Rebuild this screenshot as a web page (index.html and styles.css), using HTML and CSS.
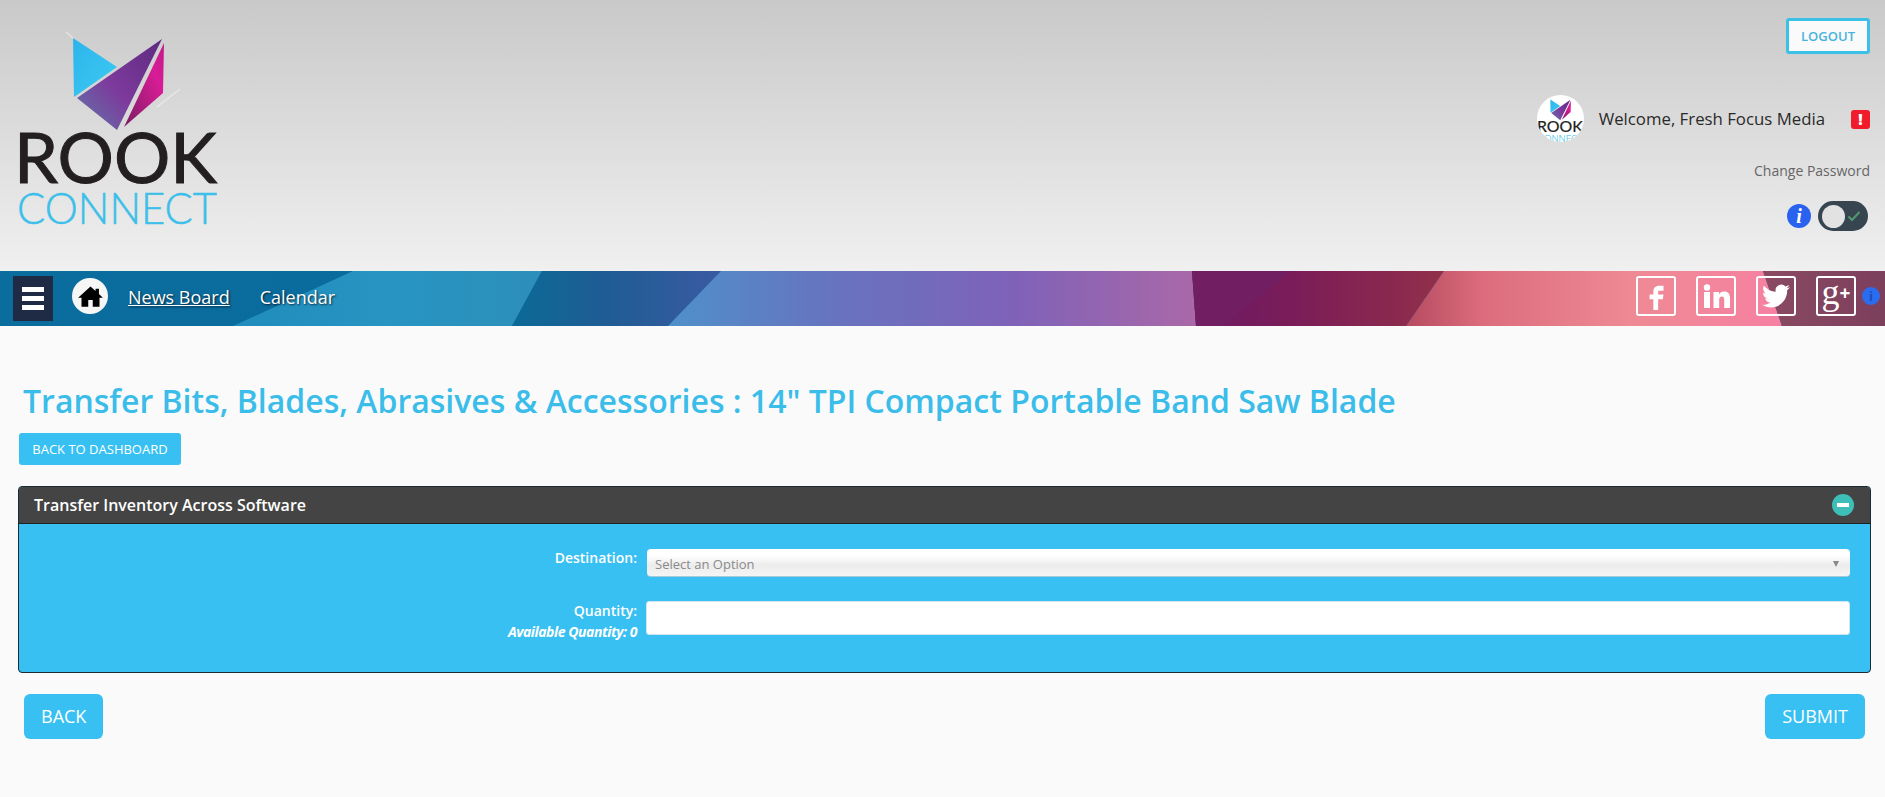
FILE: index.html
```html
<!DOCTYPE html>
<html lang="en">
<head>
  <meta charset="UTF-8">
  <meta name="viewport" content="width=device-width, initial-scale=1.0">
  <title>Transfer Inventory</title>
  <link rel="stylesheet" href="styles.css">
</head>
<body>
  <svg class="defs" width="0" height="0">
    <defs>
      <linearGradient id="g-cyan" x1="0" y1="0" x2="1" y2="1">
        <stop offset="0" stop-color="#2db4ec"/>
        <stop offset="1" stop-color="#3ccbf2"/>
      </linearGradient>
      <linearGradient id="g-purple" x1="0" y1="1" x2="1" y2="0">
        <stop offset="0" stop-color="#5f78aa"/>
        <stop offset="0.45" stop-color="#7d3a9c"/>
        <stop offset="1" stop-color="#5e2a80"/>
      </linearGradient>
      <linearGradient id="g-magenta" x1="0" y1="1" x2="1" y2="0">
        <stop offset="0" stop-color="#7a1d62"/>
        <stop offset="0.7" stop-color="#d81c96"/>
        <stop offset="1" stop-color="#c21a8a"/>
      </linearGradient>
      <symbol id="rook-logo" viewBox="0 0 240 240">
        <path d="M66 32 L74 39 M157 107 L180 89" stroke="#f4f4f4" stroke-width="1.5" stroke-opacity="0.6" fill="none"/>
        <polygon points="73,38 117,67 74,97" fill="url(#g-cyan)"/>
        <polygon points="162,39 77,98 117,130" fill="url(#g-purple)"/>
        <polygon points="164,43 124,127 163,93" fill="url(#g-magenta)"/>
        <text class="logo-rook" x="14" y="183" textLength="203" lengthAdjust="spacingAndGlyphs">ROOK</text>
        <text class="logo-connect" x="17" y="224" textLength="200" lengthAdjust="spacingAndGlyphs">CONNECT</text>
      </symbol>
    </defs>
  </svg>

  <header class="top-header">
    <a class="logo" href="#"><svg width="240" height="240"><use href="#rook-logo"/></svg></a>
    <div class="user-box">
      <a class="logout-btn" href="#">LOGOUT</a>
      <div class="welcome-row">
        <span class="avatar"><svg width="47" height="47" viewBox="14 18 208 208"><use href="#rook-logo" width="240" height="240"/></svg></span>
        <span class="welcome-text">Welcome, Fresh Focus Media</span>
        <span class="alert-icon">!</span>
      </div>
      <a class="change-pass" href="#">Change Password</a>
      <div class="toggle-row">
        <span class="info-icon">i</span>
        <span class="toggle">
          <span class="toggle-knob"></span>
          <svg class="toggle-check" width="14" height="12" viewBox="0 0 14 12"><path d="M1.5 6.5 L5 10 L12.5 2" fill="none" stroke="#4f9a70" stroke-width="2"/></svg>
        </span>
      </div>
    </div>
  </header>

  <nav class="main-nav">
    <svg class="nav-bg" width="1885" height="55" viewBox="0 0 1885 55" preserveAspectRatio="none">
      <defs>
        <linearGradient id="n-left"><stop offset="0" stop-color="#0b6c9e"/><stop offset="1" stop-color="#05689a"/></linearGradient>
        <linearGradient id="n-teal"><stop offset="0" stop-color="#1f8cbc"/><stop offset="0.5" stop-color="#2794c2"/><stop offset="1" stop-color="#2d8fba"/></linearGradient>
        <linearGradient id="n-navy"><stop offset="0" stop-color="#0b6a96"/><stop offset="0.45" stop-color="#1f5c94"/><stop offset="1" stop-color="#3a5aa2"/></linearGradient>
        <linearGradient id="n-violet"><stop offset="0" stop-color="#4f90ca"/><stop offset="0.3" stop-color="#6674c0"/><stop offset="0.65" stop-color="#7e62b8"/><stop offset="1" stop-color="#aa68a8"/></linearGradient>
        <linearGradient id="n-wine"><stop offset="0" stop-color="#6d1b66"/><stop offset="0.4" stop-color="#7a1c58"/><stop offset="1" stop-color="#92304a"/></linearGradient>
        <linearGradient id="n-pink"><stop offset="0" stop-color="#b54a60"/><stop offset="0.2" stop-color="#dc6c7c"/><stop offset="0.6" stop-color="#ee8a94"/><stop offset="1" stop-color="#f680a2"/></linearGradient>
        <linearGradient id="n-plum"><stop offset="0" stop-color="#8a4a62"/><stop offset="1" stop-color="#7c3f5c"/></linearGradient>
      </defs>
      <rect width="1885" height="55" fill="url(#n-left)"/>
      <polygon points="353,0 542,0 512,55 233,55" fill="url(#n-teal)"/>
      <polygon points="542,0 721,0 668,55 512,55" fill="url(#n-navy)"/>
      <polygon points="721,0 1192,0 1196,55 668,55" fill="url(#n-violet)"/>
      <polygon points="1192,0 1444,0 1406,55 1196,55" fill="url(#n-wine)"/>
      <polygon points="1192,0 1291,0 1222,55 1196,55" fill="#721e62"/>
      <polygon points="1444,0 1763,0 1782,55 1406,55" fill="url(#n-pink)"/>
      <polygon points="1763,0 1885,0 1885,55 1782,55" fill="url(#n-plum)"/>
    </svg>
    <div class="nav-left">
      <button class="menu-btn" type="button"><span></span><span></span><span></span></button>
      <a class="home-btn" href="#">
        <svg width="27" height="27" viewBox="0 0 24 24"><path d="M12 3 L1 13 H4 V21 H10 V15 H14 V21 H20 V13 H23 L19.5 9.8 V5 H16.5 V7.1 Z" fill="#000"/></svg>
      </a>
      <a class="nav-link current" href="#">News Board</a>
      <a class="nav-link" href="#">Calendar</a>
    </div>
    <div class="nav-right">
      <a class="social" href="#">
        <svg width="26" height="30" viewBox="0 0 24 28"><path d="M15 9 H19 V4.5 H15 C11.5 4.5 9.5 6.6 9.5 10 V12.5 H6 V17 H9.5 V27 H14 V17 H18.4 L19 12.5 H14 V10.2 C14 9.4 14.3 9 15 9 Z" fill="#fff"/></svg>
      </a>
      <a class="social" href="#">
        <svg width="30" height="30" viewBox="0 0 30 30"><circle cx="6" cy="6.5" r="3.2" fill="#fff"/><rect x="3" y="11" width="6" height="16" fill="#fff"/><path d="M12.5 11 H18 V13.4 C19 11.8 20.8 10.6 23 10.6 C27.2 10.6 29 13.2 29 17.4 V27 H23.2 V18.4 C23.2 16.4 22.4 15.4 20.9 15.4 C19.2 15.4 18.2 16.6 18.2 18.6 V27 H12.5 Z" fill="#fff"/></svg>
      </a>
      <a class="social" href="#">
        <svg width="28" height="28" viewBox="0 0 24 24"><path d="M23.953 4.57a10 10 0 01-2.825.775 4.958 4.958 0 002.163-2.723c-.951.555-2.005.959-3.127 1.184a4.92 4.92 0 00-8.384 4.482C7.69 8.095 4.067 6.13 1.64 3.162a4.822 4.822 0 00-.666 2.475c0 1.71.87 3.213 2.188 4.096a4.904 4.904 0 01-2.228-.616v.06a4.923 4.923 0 003.946 4.827 4.996 4.996 0 01-2.212.085 4.936 4.936 0 004.604 3.417 9.867 9.867 0 01-6.102 2.105c-.39 0-.779-.023-1.17-.067a13.995 13.995 0 007.557 2.209c9.053 0 13.998-7.496 13.998-13.985 0-.21 0-.42-.015-.63A9.935 9.935 0 0024 4.59z" fill="#fff"/></svg>
      </a>
      <a class="social social-text" href="#"><span class="gee">g</span><span class="plus">+</span></a>
      <span class="nav-info">i</span>
    </div>
  </nav>

  <main class="content">
    <h1 class="page-title">Transfer Bits, Blades, Abrasives &amp; Accessories : 14" TPI Compact Portable Band Saw Blade</h1>
    <a class="btn-small" href="#">BACK TO DASHBOARD</a>

    <section class="panel">
      <div class="panel-heading">
        <span>Transfer Inventory Across Software</span>
        <span class="collapse-icon"></span>
      </div>
      <div class="panel-body">
        <div class="form-row row-dest">
          <label class="form-label">Destination:</label>
          <div class="fake-select">
            <span>Select an Option</span>
            <span class="caret"></span>
          </div>
        </div>
        <div class="form-row row-qty">
          <label class="form-label">Quantity:<em>Available Quantity: 0</em></label>
          <input class="form-input" type="text">
        </div>
      </div>
    </section>

    <div class="actions">
      <a class="btn-big" href="#">BACK</a>
      <a class="btn-big" href="#">SUBMIT</a>
    </div>
  </main>
</body>
</html>
```

FILE: styles.css
```css
body {
  font-family: "Open Sans", sans-serif;
  margin: 0;
  padding: 0;
  background-color: #fafafa;
  color: #222;
  overflow: hidden;
}
a {
  text-decoration: none;
}
.defs {
  display: block;
  height: 0;
}
.logo-rook {
  font-family: Lato, sans-serif;
  font-size: 70px;
  font-weight: 400;
  fill: #231f20;
  stroke: #231f20;
  stroke-width: 1px;
}
.logo-connect {
  font-family: Lato, sans-serif;
  font-size: 43px;
  font-weight: 300;
  fill: #3cbfe8;
  stroke: #3cbfe8;
  stroke-width: 0.5px;
}

/* top header */
.top-header {
  height: 271px;
  box-sizing: border-box;
  display: flex;
  justify-content: space-between;
  background: linear-gradient(to bottom, #c9c9c9, #f0f0f0);
}
.logo {
  display: block;
  height: 240px;
}
.user-box {
  display: flex;
  flex-direction: column;
  align-items: flex-end;
  padding: 18px 15px 0 0;
}
.logout-btn {
  width: 84px;
  height: 36px;
  box-sizing: border-box;
  display: flex;
  align-items: center;
  justify-content: center;
  border: 3px solid #3dc0e8;
  border-radius: 3px;
  background: #fafafa;
  color: #46b4dc;
  font-size: 13px;
  font-weight: 600;
}
.welcome-row {
  display: flex;
  align-items: center;
  margin-top: 40px;
  height: 48px;
}
.avatar {
  width: 47px;
  height: 47px;
  border-radius: 50%;
  background: #fff;
  overflow: hidden;
  margin-right: 15px;
}
.avatar svg {
  display: block;
}
.welcome-text {
  font-size: 16.8px;
  color: #2a2a2a;
  margin-right: 26px;
}
.alert-icon {
  width: 19px;
  height: 19px;
  margin-top: 2px;
  border-radius: 3px;
  background: #f01c2c;
  color: #fff;
  font-weight: 800;
  font-size: 15px;
  line-height: 19px;
  text-align: center;
}
.change-pass {
  margin-top: 19px;
  font-size: 14px;
  line-height: 20px;
  color: #666;
}
.toggle-row {
  display: flex;
  align-items: center;
  margin-top: 20px;
  margin-right: 2px;
}
.info-icon {
  width: 24px;
  height: 24px;
  border-radius: 50%;
  background: #2a62f0;
  color: #fff;
  font-family: "Liberation Serif", serif;
  font-style: italic;
  font-weight: 700;
  font-size: 20px;
  line-height: 24px;
  text-align: center;
  margin-right: 7px;
}
.toggle {
  width: 50px;
  height: 30px;
  box-sizing: border-box;
  padding: 0 7px 0 4px;
  border-radius: 15px;
  background: #36454f;
  display: flex;
  align-items: center;
  justify-content: space-between;
}
.toggle-knob {
  width: 23px;
  height: 23px;
  border-radius: 50%;
  background: #e2e2e2;
}

/* nav bar */
.main-nav {
  position: relative;
  height: 55px;
  display: flex;
  justify-content: space-between;
  align-items: center;
  overflow: hidden;
}
.nav-bg {
  position: absolute;
  left: 0;
  top: 0;
  width: 100%;
  height: 100%;
}
.nav-left,
.nav-right {
  position: relative;
  display: flex;
  align-items: center;
}
.nav-left {
  padding-left: 13px;
}
.menu-btn {
  width: 40px;
  height: 45px;
  border: none;
  padding: 0;
  background: #1f2a44;
  display: flex;
  flex-direction: column;
  align-items: center;
  justify-content: center;
  gap: 4px;
}
.menu-btn span {
  display: block;
  width: 22px;
  height: 5px;
  background: #fff;
}
.home-btn {
  width: 36px;
  height: 36px;
  margin-left: 19px;
  margin-bottom: 5px;
  border-radius: 50%;
  background: #f6f6f6;
  display: flex;
  align-items: center;
  justify-content: center;
}
.nav-link {
  margin-left: 20px;
  margin-bottom: 4px;
  color: #fff;
  font-size: 18px;
  text-shadow: 1px 1px 2px rgba(0,0,0,0.7);
}
.nav-link.current {
  text-decoration: underline;
}
.nav-link + .nav-link {
  margin-left: 30px;
}
.nav-right {
  gap: 20px;
  padding-right: 5px;
  padding-bottom: 5px;
}
.social {
  width: 40px;
  height: 40px;
  box-sizing: border-box;
  border: 2px solid #fff;
  border-radius: 3px;
  display: flex;
  align-items: center;
  justify-content: center;
  color: #fff;
}
.gee {
  font-family: "Liberation Serif", serif;
  font-size: 36px;
  line-height: 30px;
  margin-top: -8px;
}
.plus {
  font-size: 19px;
  font-weight: 700;
  line-height: 20px;
  margin-top: -6px;
}
.nav-info {
  width: 18px;
  height: 18px;
  margin-left: -14px;
  border-radius: 50%;
  background: #2a6cf0;
  color: #1d4db8;
  font-size: 13px;
  font-weight: 700;
  line-height: 18px;
  text-align: center;
}

/* page content */
.content {
  padding: 0 14px 0 18px;
}
.page-title {
  margin: 54px 0 12px 5px;
  font-size: 32px;
  line-height: 41px;
  font-weight: 600;
  color: #3bbdea;
}
.btn-small {
  display: block;
  margin-left: 1px;
  width: 162px;
  height: 32px;
  border-radius: 3px;
  background: #38c0f2;
  color: #fff;
  font-size: 13px;
  line-height: 32px;
  text-align: center;
}
.panel {
  margin-top: 21px;
  border: 1px solid #1c2b33;
  border-radius: 4px;
  background: #38c0f2;
  overflow: hidden;
}
.panel-heading {
  height: 37px;
  box-sizing: border-box;
  padding: 0 16px 0 15px;
  border-bottom: 1px solid #222;
  background: #444;
  color: #fff;
  font-size: 16px;
  font-weight: 600;
  display: flex;
  align-items: center;
  justify-content: space-between;
}
.collapse-icon {
  width: 22px;
  height: 22px;
  border-radius: 50%;
  background: #3dbfb8;
  position: relative;
}
.collapse-icon::after {
  content: "";
  position: absolute;
  left: 5px;
  top: 9px;
  width: 12px;
  height: 4px;
  background: #fff;
}
.panel-body {
  height: 148px;
  box-sizing: border-box;
  padding: 25px 20px 0 0;
}
.form-row {
  display: flex;
  align-items: flex-start;
}
.row-dest .form-label {
  margin-top: -1px;
}
.row-qty {
  margin-top: 24px;
}
.form-label {
  width: 618px;
  flex-shrink: 0;
  text-align: right;
  color: #fff;
  font-size: 14px;
  font-weight: 600;
  line-height: 19px;
}
.form-label em {
  display: block;
  margin-top: 2px;
  letter-spacing: -0.45px;
  font-weight: 700;
}
.fake-select {
  margin-left: 10px;
  flex: 1;
  height: 28px;
  box-sizing: border-box;
  padding: 2px 11px 0 8px;
  border-radius: 4px;
  border-bottom: 1px solid #a9c8d6;
  background: linear-gradient(to bottom, #fff 25%, #ececec 60%, #f5f5f5);
  color: #8a8a8a;
  font-size: 13px;
  display: flex;
  align-items: center;
  justify-content: space-between;
}
.caret {
  width: 0;
  height: 0;
  border-left: 3.5px solid transparent;
  border-right: 3.5px solid transparent;
  border-top: 6px solid #888;
}
.form-input {
  margin-left: 9px;
  flex: 1;
  height: 34px;
  box-sizing: border-box;
  border: 1px solid #cfe4ee;
  border-radius: 3px;
  background: #fff;
}
.actions {
  display: flex;
  justify-content: space-between;
  margin-top: 21px;
  padding: 0 6px;
}
.btn-big {
  height: 45px;
  padding: 0 17px;
  border-radius: 6px;
  background: #38c0f2;
  color: #fff;
  font-size: 18px;
  line-height: 45px;
}
```
